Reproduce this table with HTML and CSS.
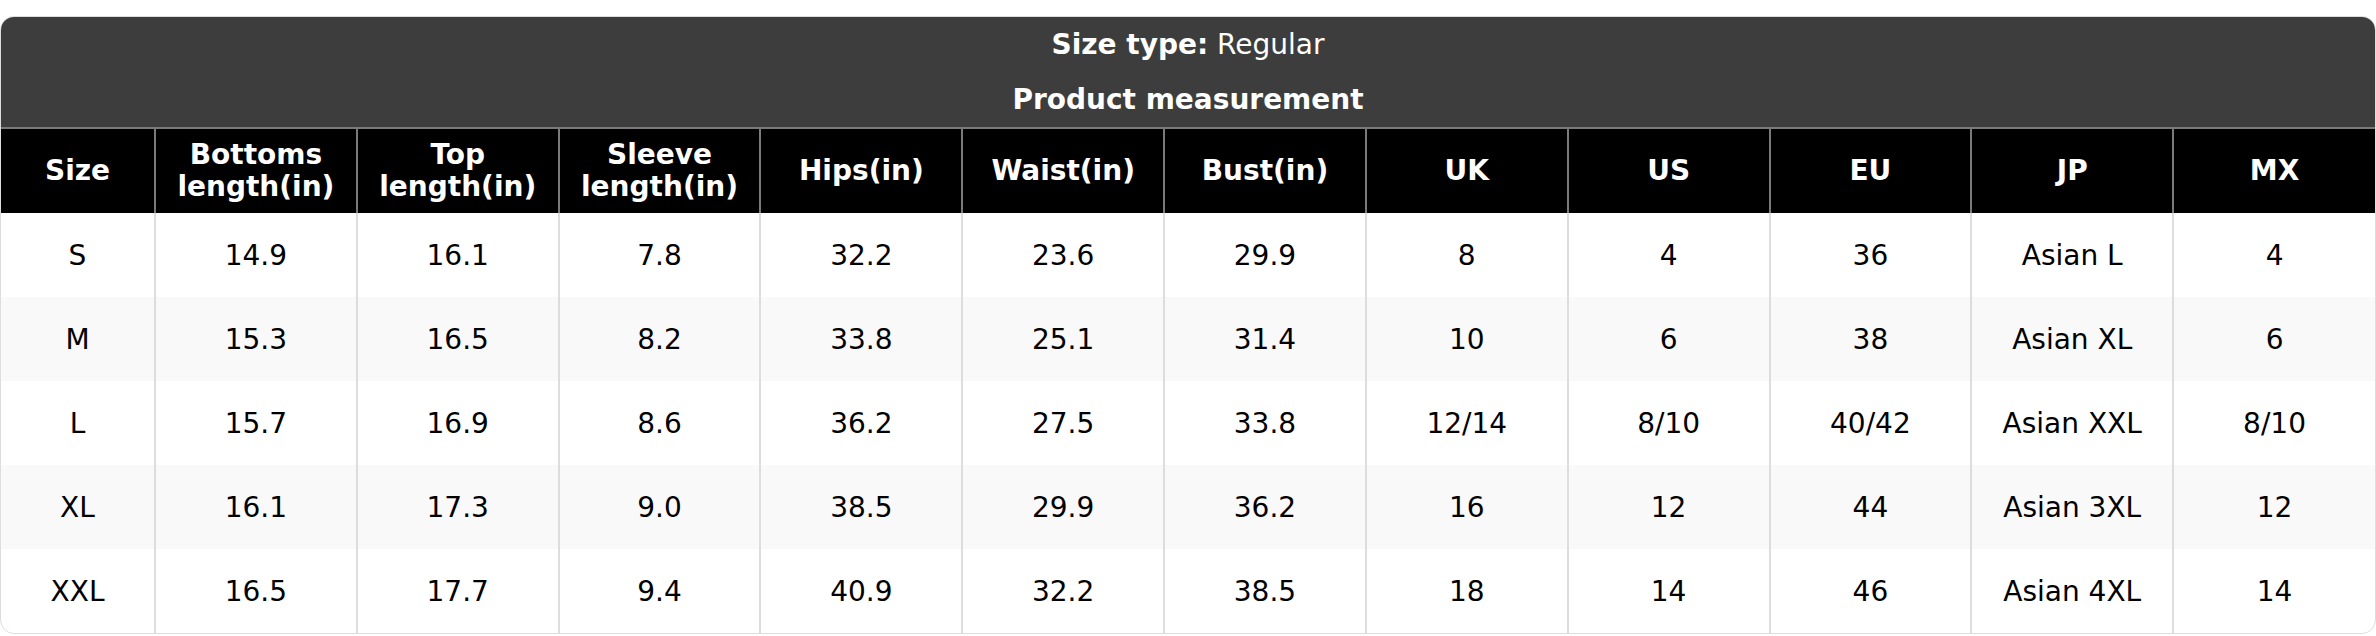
FILE: index.html
```html
<!DOCTYPE html>
<html>
<head>
<meta charset="utf-8">
<link rel="stylesheet" href="styles.css">
</head>
<body>
<div class="card">
  <div class="title">
    <div class="title-line"><span><b>Size type:</b> Regular</span></div>
    <div class="title-line"><span><b>Product measurement</b></span></div>
  </div>
  <table class="chart">
    <colgroup>
      <col class="c-size"><col><col><col><col><col><col><col><col><col><col><col>
    </colgroup>
    <thead>
      <tr>
        <th>Size</th><th>Bottoms<br>length(in)</th><th>Top<br>length(in)</th><th>Sleeve<br>length(in)</th><th>Hips(in)</th><th>Waist(in)</th><th>Bust(in)</th><th>UK</th><th>US</th><th>EU</th><th>JP</th><th>MX</th>
      </tr>
    </thead>
    <tbody>
      <tr><td>S</td><td>14.9</td><td>16.1</td><td>7.8</td><td>32.2</td><td>23.6</td><td>29.9</td><td>8</td><td>4</td><td>36</td><td>Asian L</td><td>4</td></tr>
      <tr><td>M</td><td>15.3</td><td>16.5</td><td>8.2</td><td>33.8</td><td>25.1</td><td>31.4</td><td>10</td><td>6</td><td>38</td><td>Asian XL</td><td>6</td></tr>
      <tr><td>L</td><td>15.7</td><td>16.9</td><td>8.6</td><td>36.2</td><td>27.5</td><td>33.8</td><td>12/14</td><td>8/10</td><td>40/42</td><td>Asian XXL</td><td>8/10</td></tr>
      <tr><td>XL</td><td>16.1</td><td>17.3</td><td>9.0</td><td>38.5</td><td>29.9</td><td>36.2</td><td>16</td><td>12</td><td>44</td><td>Asian 3XL</td><td>12</td></tr>
      <tr><td>XXL</td><td>16.5</td><td>17.7</td><td>9.4</td><td>40.9</td><td>32.2</td><td>38.5</td><td>18</td><td>14</td><td>46</td><td>Asian 4XL</td><td>14</td></tr>
    </tbody>
  </table>
</div>
</body>
</html>
```
FILE: styles.css
```css
html, body {
  margin: 0;
  padding: 0;
  background: #ffffff;
}
body {
  padding-top: 16px;
  font-family: "DejaVu Sans", sans-serif;
}
.card {
  border: 1px solid #dddddd;
  border-radius: 14px;
  overflow: hidden;
  box-sizing: border-box;
  width: 2376px;
}
.title {
  background: #3d3d3d;
  color: #ffffff;
  display: flex;
  flex-direction: column;
  border-bottom: 2px solid #7a7a7a;
}
.title-line {
  height: 55px;
  display: flex;
  align-items: center;
  justify-content: center;
  font-size: 28px;
}
.chart {
  width: 100%;
  border-collapse: collapse;
  table-layout: fixed;
}
.c-size {
  width: 154px;
}
.chart th {
  background: #000000;
  color: #ffffff;
  font-weight: bold;
  font-size: 28px;
  line-height: 32px;
  height: 84px;
  padding: 0 4px;
  box-sizing: border-box;
  border-left: 2px solid #7a7a7a;
  text-align: center;
  vertical-align: middle;
}
.chart th:first-child,
.chart td:first-child {
  border-left: none;
}
.chart td {
  height: 84px;
  padding: 0 4px;
  box-sizing: border-box;
  font-size: 28px;
  color: #000000;
  text-align: center;
  vertical-align: middle;
  border-left: 2px solid #dddddd;
}
.chart tbody tr:nth-child(even) td {
  background: #f9f9f9;
}
```
